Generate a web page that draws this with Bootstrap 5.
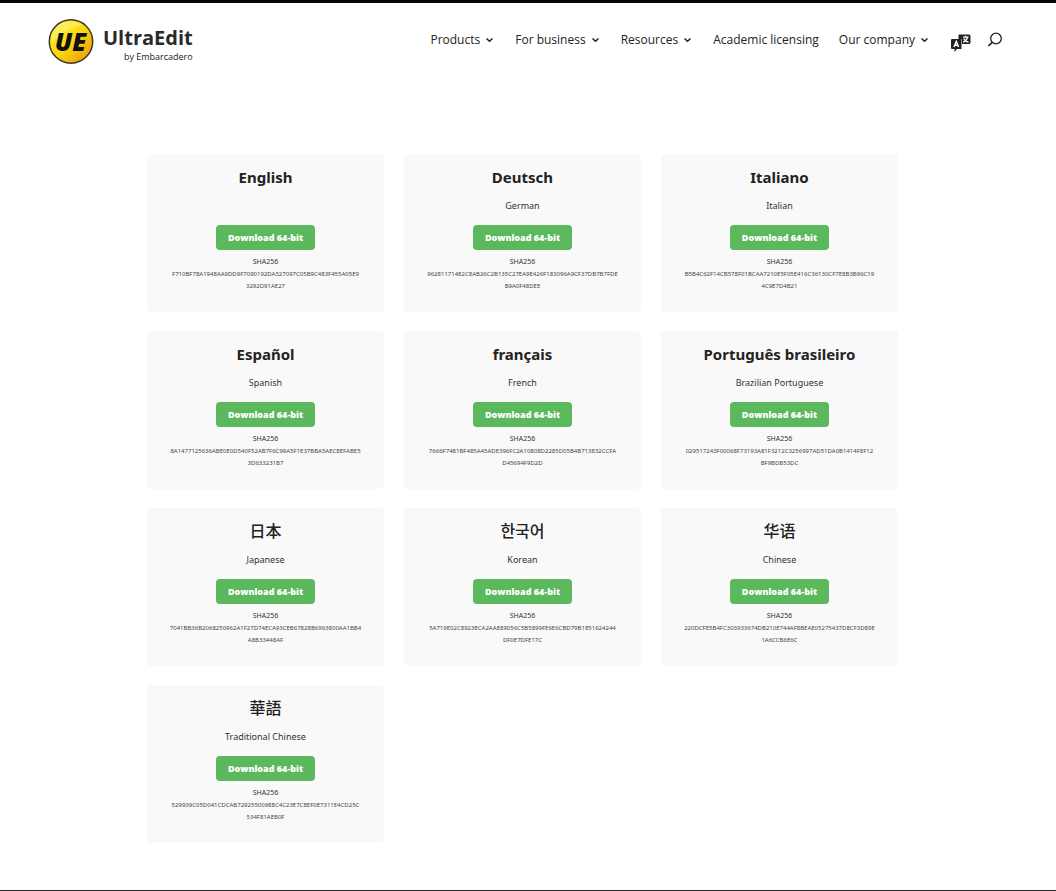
<!DOCTYPE html>
<html lang="en">
<head>
<meta charset="utf-8">
<meta name="viewport" content="width=device-width, initial-scale=1">
<title>UltraEdit downloads</title>
<link href="https://cdn.jsdelivr.net/npm/bootstrap@5.3.0/dist/css/bootstrap.min.css" rel="stylesheet">
<style>
body{font-family:"Noto Sans","Noto Sans CJK JP",sans-serif;color:#222;background:#fff}
.site-header{border-top:3px solid #0b0306;padding:13px 53px 0 47px}
.brand-text{font-size:20px;line-height:28px;font-weight:700;color:#2a2a2a;font-family:"Open Sans",sans-serif}
.brand-sub{font-size:9px;line-height:10px;font-weight:400;color:#222;font-family:"Open Sans",sans-serif}
.menu-link{font-family:"Open Sans",sans-serif;font-size:12px;line-height:20px;color:#222;text-decoration:none;white-space:nowrap;background:none;border:0;padding:0}
.main-menu{gap:20px;padding-top:14px}
.icon-pair{gap:15px}
.chev{margin:0 1px 0 5px}
.icon-btn{background:none;border:0;padding:0;line-height:0;color:#222}
.downloads{padding:88px 16px 47px}
.dl-row{--bs-gutter-x:20px;row-gap:19px}
.dl-card{background:#f9f9f9;border:0;border-radius:4px;padding:11px 20px 15px;min-height:158px;text-align:center}
.dl-title{font-size:15px;line-height:24px;height:24px;font-weight:700;margin:0 0 9px}
.cjk-title{font-size:16px;font-weight:500}
.dl-sub{font-size:9px;line-height:16px;height:16px;margin:0 0 10px;color:#333}
.dl-btn{--bs-btn-color:#fff;--bs-btn-bg:#5cb85c;--bs-btn-hover-color:#fff;--bs-btn-hover-bg:#4cae4c;--bs-btn-padding-x:12px;--bs-btn-padding-y:0px;--bs-btn-font-size:9px;--bs-btn-font-weight:800;--bs-btn-line-height:25px;--bs-btn-border-width:0;--bs-btn-border-radius:4px;font-family:"Open Sans",sans-serif}
.sha-label{font-size:7px;line-height:12px;margin:6px 0 0;color:#333}
.sha-hash{font-size:6px;line-height:12px;margin:0;color:#444}
.site-footer{border-top:1px solid #222}
@media (min-width:992px){.downloads{padding-left:147px;padding-right:158px}}
</style>
</head>
<body>
<header class="site-header d-flex flex-wrap align-items-start justify-content-between">
  <a href="#" class="d-flex text-decoration-none" aria-label="UltraEdit by Embarcadero">
    <svg width="48" height="50" viewBox="0 0 48 50" aria-hidden="true">
      <defs><linearGradient id="gold" x1="0" y1="0" x2="1" y2="1"><stop offset="0" stop-color="#fff33a"/><stop offset=".5" stop-color="#fbd90b"/><stop offset="1" stop-color="#e88d14"/></linearGradient></defs>
      <circle cx="24" cy="25.500" r="21.700" fill="url(#gold)" stroke="#3a3930" stroke-width="1.500"/>
      <path d="M4 27C3 9 21 0 36 9C25 12 14 17 4 27Z" fill="#fff" opacity=".25"/>
      <text x="23.500" y="34.500" text-anchor="middle" font-family="Open Sans,sans-serif" font-size="25" font-weight="800" font-style="italic" fill="#111">UE</text>
    </svg>
    <span class="d-flex flex-column align-items-end ms-2 pt-2"><span class="brand-text">UltraEdit</span><span class="brand-sub">by Embarcadero</span></span>
  </a>
  <nav class="main-menu d-flex flex-wrap align-items-start" aria-label="Main">
    <button type="button" class="menu-link">Products<svg class="chev" width="9" height="8" viewBox="0 0 9 8" aria-hidden="true"><path d="M1.500 1.500L4.500 4.300L7.500 1.500" fill="none" stroke="#222" stroke-width="1.500"/></svg></button>
    <button type="button" class="menu-link">For business<svg class="chev" width="9" height="8" viewBox="0 0 9 8" aria-hidden="true"><path d="M1.500 1.500L4.500 4.300L7.500 1.500" fill="none" stroke="#222" stroke-width="1.500"/></svg></button>
    <button type="button" class="menu-link">Resources<svg class="chev" width="9" height="8" viewBox="0 0 9 8" aria-hidden="true"><path d="M1.500 1.500L4.500 4.300L7.500 1.500" fill="none" stroke="#222" stroke-width="1.500"/></svg></button>
    <a href="#" class="menu-link">Academic licensing</a>
    <button type="button" class="menu-link">Our company<svg class="chev" width="9" height="8" viewBox="0 0 9 8" aria-hidden="true"><path d="M1.500 1.500L4.500 4.300L7.500 1.500" fill="none" stroke="#222" stroke-width="1.500"/></svg></button>
    <div class="icon-pair d-flex align-items-start">
      <button type="button" class="icon-btn mt-1" aria-label="Language">
        <svg width="22" height="20" viewBox="0 0 22 20"><path d="M9 .5H19Q20.500 .5 20.500 2V8.500Q20.500 10 19 10H12V5H8.500V1Z" fill="#222"/><path d="M13 3.200H18.500M15.700 1.800V3.200M17.500 3.500Q16.500 7 13 8.200M13.800 4.500Q15 7.500 18.500 8.200" fill="none" stroke="#fff" stroke-width="1.200"/><path d="M2 5H11.500V15H7L4.500 18V15H2Q1 15 1 14V6Q1 5 2 5Z" fill="#222"/><path d="M4 13L6.300 7.500L8.600 13M5 11.300H7.700" fill="none" stroke="#fff" stroke-width="1.500"/></svg>
      </button>
      <button type="button" class="icon-btn" aria-label="Search">
        <svg width="16" height="20" viewBox="0 0 16 20"><circle cx="9" cy="8.500" r="5.300" fill="none" stroke="#222" stroke-width="1.300"/><path d="M5.200 12.300L1.300 16" stroke="#222" stroke-width="1.700"/></svg>
      </button>
    </div>
  </nav>
</header>
<main class="downloads">
  <div class="row row-cols-1 row-cols-sm-2 row-cols-md-3 dl-row">
    <div class="col"><section class="card d-block dl-card"><h2 class="dl-title">English</h2><p class="dl-sub"></p><button type="button" class="btn dl-btn">Download 64-bit</button><p class="sha-label">SHA256</p><p class="sha-hash">F710BF78A1948AA9DD9F7090192DA527097C05B9C483F455A05E9<wbr>3292D91AE27</p></section></div>
    <div class="col"><section class="card d-block dl-card"><h2 class="dl-title" lang="de">Deutsch</h2><p class="dl-sub">German</p><button type="button" class="btn dl-btn">Download 64-bit</button><p class="sha-label">SHA256</p><p class="sha-hash">96281171482C8AB26C2B135C27EA9E426F183096A9CF37DB7B7FDE<wbr>B9A0F48DEE</p></section></div>
    <div class="col"><section class="card d-block dl-card"><h2 class="dl-title" lang="it">Italiano</h2><p class="dl-sub">Italian</p><button type="button" class="btn dl-btn">Download 64-bit</button><p class="sha-label">SHA256</p><p class="sha-hash">B5B4C62F14CB578F01BCAA7210E5F05E416C36130CF7E8B3B96C19<wbr>4C9E7D4B21</p></section></div>
    <div class="col"><section class="card d-block dl-card"><h2 class="dl-title" lang="es">Español</h2><p class="dl-sub">Spanish</p><button type="button" class="btn dl-btn">Download 64-bit</button><p class="sha-label">SHA256</p><p class="sha-hash">8A1477125636ABE0E0D540F52AB7F6C99A5F1E37BBA5AEC8EFABE5<wbr>3D633231B7</p></section></div>
    <div class="col"><section class="card d-block dl-card"><h2 class="dl-title" lang="fr">français</h2><p class="dl-sub">French</p><button type="button" class="btn dl-btn">Download 64-bit</button><p class="sha-label">SHA256</p><p class="sha-hash">7666F7481BF485A45ADE396FC2A10808D2285D05B4B713832CCFA<wbr>D45694F9D2D</p></section></div>
    <div class="col"><section class="card d-block dl-card"><h2 class="dl-title" lang="pt-BR">Português brasileiro</h2><p class="dl-sub">Brazilian Portuguese</p><button type="button" class="btn dl-btn">Download 64-bit</button><p class="sha-label">SHA256</p><p class="sha-hash">029517243F00068F73193A81F3212C3256997AD51DA0B1414F8F12<wbr>BF9BDB53DC</p></section></div>
    <div class="col"><section class="card d-block dl-card"><h2 class="dl-title cjk-title" lang="ja">日本</h2><p class="dl-sub">Japanese</p><button type="button" class="btn dl-btn">Download 64-bit</button><p class="sha-label">SHA256</p><p class="sha-hash">7041BB36B2068250962A1F27D74ECA93CEB67828B6963800AA1BB4<wbr>A8B33448AF</p></section></div>
    <div class="col"><section class="card d-block dl-card"><h2 class="dl-title cjk-title" lang="ko">한국어</h2><p class="dl-sub">Korean</p><button type="button" class="btn dl-btn">Download 64-bit</button><p class="sha-label">SHA256</p><p class="sha-hash">5A719E02C8923ECA2AA889056C5B5899FE6E6CBD79B1851624244<wbr>DF0E7DFE17C</p></section></div>
    <div class="col"><section class="card d-block dl-card"><h2 class="dl-title cjk-title" lang="zh-Hans">华语</h2><p class="dl-sub">Chinese</p><button type="button" class="btn dl-btn">Download 64-bit</button><p class="sha-label">SHA256</p><p class="sha-hash">220DCFE5B4FC303933674DB210E744AF8BEAE05275437D8CF3D89E<wbr>1A6CCB6E6C</p></section></div>
    <div class="col"><section class="card d-block dl-card"><h2 class="dl-title cjk-title" lang="zh-Hant">華語</h2><p class="dl-sub">Traditional Chinese</p><button type="button" class="btn dl-btn">Download 64-bit</button><p class="sha-label">SHA256</p><p class="sha-hash">529939C05D041CDCAB72925500988C4C23E7C8EF0E7311E4CD25C<wbr>534F81AEB0F</p></section></div>
  </div>
</main>
<footer class="site-footer"></footer>
<script src="https://cdn.jsdelivr.net/npm/bootstrap@5.3.0/dist/js/bootstrap.bundle.min.js"></script>
</body>
</html>
